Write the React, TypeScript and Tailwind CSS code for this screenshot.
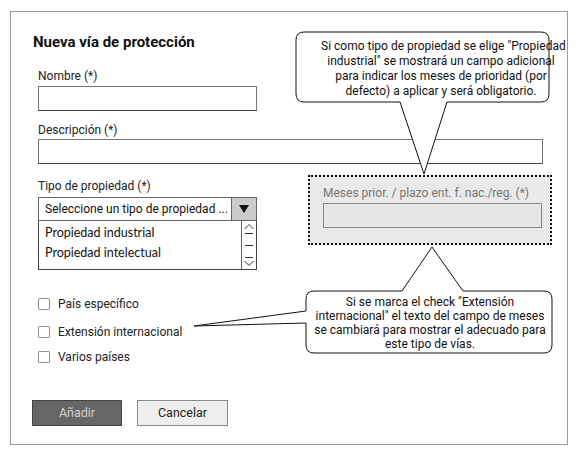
import { ReactNode } from 'react'

// Campo de texto vacío estilo maqueta
function TextBox({ className = '' }: { className?: string }) {
  return <div className={`h-[25px] border border-[#777] border-b-[#444] bg-white ${className}`} />
}

function Check({ label, className = '' }: { label: string; className?: string }) {
  return (
    <div className={`flex h-[16px] items-center gap-[8px] ${className}`}>
      <span className="h-[12px] w-[12px] rounded-[1px] border border-[#9a938c] bg-white" />
      <span className="text-[12px] leading-[16px] text-[#222]">{label}</span>
    </div>
  )
}

function Bubble({ className, children }: { className: string; children: ReactNode }) {
  return (
    <div className={`absolute whitespace-nowrap text-center text-[12px] text-[#111] ${className}`}>
      {children}
    </div>
  )
}

export default function App() {
  return (
    <div
      className="relative h-[457px] w-[579px] overflow-hidden bg-white pt-[11px] pl-[10px]"
      style={{ fontFamily: 'Roboto, "Liberation Sans", sans-serif' }}
    >
      <div className="h-[434px] w-[558px] border border-[#999] pl-[27px] pt-[20px]">
        <h1 className="-ml-[5px] text-[15px] font-bold leading-[20px] text-[#111]">Nueva vía de protección</h1>

        <div className="mt-[16px] text-[12px] leading-[16px] text-[#222]">Nombre (*)</div>
        <TextBox className="mt-[2px] w-[219px]" />

        <div className="mt-[11px] text-[12px] leading-[16px] text-[#222]">Descripción (*)</div>
        <TextBox className="mt-[1px] w-[505px]" />

        <div className="mt-[11px] flex items-start">
          <div className="w-[219px] pt-[3px]">
            <div className="text-[12px] leading-[16px] text-[#222]">Tipo de propiedad (*)</div>
            <div className="mt-[3px] flex h-[24px] border border-[#666] bg-white">
              <div className="flex-1 truncate pl-[6px] text-[12px] leading-[22px] text-[#111]">
                Seleccione un tipo de propiedad ...
              </div>
              <div className="flex w-[25px] items-center justify-center border-l border-[#666] bg-[#cbcbcb]">
                <svg width="10" height="8" viewBox="0 0 10 8">
                  <path d="M0 0 H10 L5 8 Z" fill="#111" />
                </svg>
              </div>
            </div>
            <div className="flex h-[49px] border border-t-0 border-[#444] bg-white">
              <div
                className="flex-1 pl-[6px] pt-[2px] text-[12.5px] leading-[20px] text-[#111]"
                style={{ fontFamily: 'Lato, "Liberation Sans", sans-serif' }}
              >
                <div>Propiedad industrial</div>
                <div>Propiedad intelectual</div>
              </div>
              <div className="w-[15px] border-l border-[#666]">
                <svg width="14" height="47" viewBox="0 0 14 47" fill="none" stroke="#333" strokeWidth="1">
                  <path d="M2.5 8 L7 3.5 L11.5 8" />
                  <path d="M3 12.5 H11" />
                  <path d="M3 24.5 H11" />
                  <path d="M3 36.5 H11" />
                  <path d="M2.5 40 L7 44.5 L11.5 40" />
                </svg>
              </div>
            </div>
          </div>

          <div className="ml-[51px] h-[70px] w-[244px] border-2 border-dotted border-[#111] bg-[#e9e9e9] pl-[13px] pt-[8px]">
            <div className="text-[12px] leading-[16px] text-[#777]">Meses prior. / plazo ent. f. nac./reg. (*)</div>
            <div className="mt-[2px] h-[25px] w-[219px] border border-[#888] bg-[#e6e6e6]" />
          </div>
        </div>

        <Check label="País específico" className="mt-[26px]" />
        <Check label="Extensión internacional" className="mt-[12px]" />
        <Check label="Varios países" className="mt-[9px]" />

        <div className="-ml-[6px] mt-[35px] flex gap-[15px]">
          <button className="h-[26px] w-[90px] border border-[#444] bg-[#666] text-[12.5px] text-[#cfcfcf]">Añadir</button>
          <button className="h-[26px] w-[91px] border border-[#888] bg-[#eeeeee] text-[12.5px] text-[#222]">Cancelar</button>
        </div>
      </div>

      {/* Bocadillos de anotación */}
      <svg className="pointer-events-none absolute left-0 top-0" width="579" height="457" viewBox="0 0 579 457">
        <path
          d="M304 32 H541 Q549 32 549 40 V94 Q549 102 541 102 H447 L424 174 L400 102 H304 Q296 102 296 94 V40 Q296 32 304 32 Z"
          fill="#fff"
          stroke="#111"
          strokeWidth="1"
        />
        <path
          d="M314 291 H402 L432 247 L463 291 H544 Q552 291 552 299 V345 Q552 353 544 353 H314 Q306 353 306 345 V323 L194 326 L306 311 V299 Q306 291 314 291 Z"
          fill="#fff"
          stroke="#111"
          strokeWidth="1"
        />
      </svg>
      <Bubble className="left-[321px] top-[39px] w-[240px] leading-[15px]">
        Si como tipo de propiedad se elige "Propiedad
        <br />
        industrial" se mostrará un campo adicional
        <br />
        para indicar los meses de prioridad (por
        <br />
        defecto) a aplicar y será obligatorio.
      </Bubble>
      <Bubble className="left-[310px] top-[295px] w-[240px] leading-[14px]">
        Si se marca el check "Extensión
        <br />
        internacional" el texto del campo de meses
        <br />
        se cambiará para mostrar el adecuado para
        <br />
        este tipo de vías.
      </Bubble>
    </div>
  )
}
